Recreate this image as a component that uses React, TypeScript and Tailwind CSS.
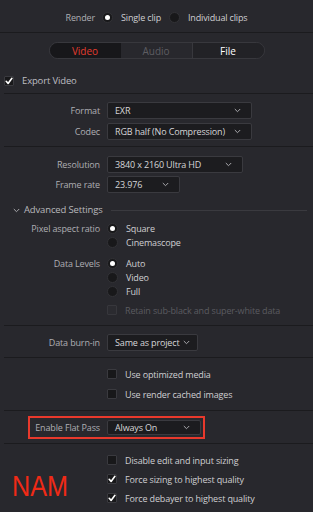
import React from 'react';

const Radio = ({ on = false }: { on?: boolean }) => (
  <span className="w-[11px] h-[11px] rounded-full bg-[#18181a] border border-[#323236] flex items-center justify-center shrink-0">
    {on && <span className="w-[5px] h-[5px] rounded-full bg-white" />}
  </span>
);

const Check = ({ on = false, dim = false }: { on?: boolean; dim?: boolean }) => (
  <span className={`w-[10px] h-[10px] rounded-[1px] border flex items-center justify-center shrink-0 ${dim ? 'bg-[#2b2b30] border-[#37373c]' : 'bg-[#18181a] border-[#3a3a3f]'}`}>
    {on && (
      <svg width="8" height="8" viewBox="0 0 8 8">
        <path d="M1.2 4.3 L3.1 6.4 L6.9 1.3" fill="none" stroke="white" strokeWidth="1.6" strokeLinecap="round" strokeLinejoin="round" />
      </svg>
    )}
  </span>
);

const Chevron = () => (
  <svg width="7" height="5" viewBox="0 0 7 5" className="shrink-0">
    <path d="M0.8 1 L3.5 3.7 L6.2 1" fill="none" stroke="#a8a8ac" strokeWidth="1" />
  </svg>
);

const Select = ({ value, w, pr = 'pr-[10px]' }: { value: string; w: string; pr?: string }) => (
  <div className={`${w} ${pr} h-[17px] bg-[#1c1c1f] border border-[#3a3a3f] rounded-[2px] flex items-center justify-between gap-[4px] pl-[7px] text-[#d6d6d8] whitespace-nowrap`}>
    <span>{value}</span>
    <Chevron />
  </div>
);

function Field({ label, children, className = '' }: any) {
  return (
    <div className={`flex items-center ${className}`}>
      <div className="w-[100px] text-right text-[#aeaeb3] whitespace-nowrap">{label}</div>
      <div className="ml-[7px]">{children}</div>
    </div>
  );
}

function OptRow({ label, children, className = '' }: any) {
  return (
    <div className={`h-[14px] flex items-center ${className}`}>
      <div className="w-[100px] text-right text-[#aeaeb3] whitespace-nowrap">{label}</div>
      <div className="ml-[7px] flex items-center gap-[8px] text-[#cfcfd2] whitespace-nowrap">{children}</div>
    </div>
  );
}

const Line = ({ className = '' }: { className?: string }) => <div className={`h-px bg-[#1b1b1e] ml-[4px] ${className}`} />;

export default function App() {
  return (
    <div className="w-[313px] h-[512px] bg-[#28282d] overflow-hidden font-['Open_Sans',sans-serif] text-[9px] tracking-[-0.15px] leading-none text-[#cfcfd2]">
      {/* render mode */}
      <div className="h-[33px] pt-[3px] flex items-center justify-center border-b border-[#1b1b1e]">
        <span className="text-[#aeaeb3] mr-[7px]">Render</span>
        <Radio on />
        <span className="ml-[8px] mr-[8px]">Single clip</span>
        <Radio />
        <span className="ml-[8px]">Individual clips</span>
      </div>

      {/* tabs */}
      <div className="mt-[9px] mx-auto w-[216px] h-[17px] rounded-full border border-[#38383d] flex overflow-hidden text-[10px] tracking-normal">
        <div className="flex-1 bg-[#17171a] text-[#e23c2f] flex items-center justify-center">Video</div>
        <div className="flex-1 text-[#5d5d62] flex items-center justify-center">Audio</div>
        <div className="flex-1 bg-[#222226] text-white flex items-center justify-center border-l border-[#38383d]">File</div>
      </div>

      <div className="mt-[16px] ml-[4px] h-[12px] flex items-center gap-[8px]">
        <Check on />
        <span className="text-[#bdbdc1] text-[9.5px]">Export Video</span>
      </div>
      <Line className="mt-[6px]" />

      <Field label="Format" className="mt-[8px]"><Select value="EXR" w="w-[145px]" /></Field>
      <Field label="Codec" className="mt-[4px]"><Select value="RGB half (No Compression)" w="w-[145px]" /></Field>
      <Line className="mt-[6px]" />

      <Field label="Resolution" className="mt-[9px]"><Select value="3840 x 2160 Ultra HD" w="w-[136px]" /></Field>
      <Field label="Frame rate" className="mt-[3px]"><Select value="23.976" w="w-[73px]" /></Field>

      {/* advanced */}
      <div className="mt-[10px] h-[14px] flex items-center pl-[13px] pr-[6px]">
        <Chevron />
        <span className="ml-[4px] text-[#b8b8bc] text-[9.5px]">Advanced Settings</span>
        <div className="flex-1 h-px bg-[#3a3a3f] ml-[8px]" />
      </div>

      <OptRow label="Pixel aspect ratio" className="mt-[4px]"><Radio on /><span>Square</span></OptRow>
      <OptRow label=""><Radio /><span>Cinemascope</span></OptRow>

      <OptRow label="Data Levels" className="mt-[7px]"><Radio on /><span>Auto</span></OptRow>
      <OptRow label=""><Radio /><span>Video</span></OptRow>
      <OptRow label=""><Radio /><span>Full</span></OptRow>
      <OptRow label="" className="mt-[5px]"><Check dim /><span className="text-[#5b5b60]">Retain sub-black and super-white data</span></OptRow>
      <Line className="mt-[8px]" />

      <Field label="Data burn-in" className="mt-[8px]"><Select value="Same as project" w="w-[91px]" pr="pr-[7px]" /></Field>
      <Line className="mt-[6px]" />

      <OptRow label="" className="mt-[9px]"><Check /><span>Use optimized media</span></OptRow>
      <OptRow label="" className="mt-[6px]"><Check /><span>Use render cached images</span></OptRow>
      <Line className="mt-[9px]" />

      {/* highlighted flat pass */}
      <div className="mt-[5px] ml-[28px] w-[177px] h-[23px] border-2 border-[#e8392c] flex items-center">
        <div className="w-[70px] text-right text-[#aeaeb3] whitespace-nowrap">Enable Flat Pass</div>
        <div className="ml-[7px]">
          <div className="w-[94px] h-[15px] bg-[#1c1c1f] border border-[#3a3a3f] rounded-[2px] flex items-center justify-between pl-[7px] pr-[10px] text-[#d6d6d8]">
            <span>Always On</span>
            <Chevron />
          </div>
        </div>
      </div>
      <Line className="mt-[4px]" />

      <div className="flex">
        <div className="w-[107px] pl-[12px] pt-[28px]">
          <span className="inline-block origin-left scale-x-[0.87] font-['Liberation_Sans',sans-serif] text-[29px] leading-none tracking-normal text-[#f02a16]">NAM</span>
        </div>
        <div className="flex flex-col">
          <div className="mt-[9px] h-[14px] flex items-center gap-[8px]"><Check /><span>Disable edit and input sizing</span></div>
          <div className="mt-[5px] h-[14px] flex items-center gap-[8px]"><Check on /><span>Force sizing to highest quality</span></div>
          <div className="mt-[5px] h-[14px] flex items-center gap-[8px]"><Check on /><span>Force debayer to highest quality</span></div>
        </div>
      </div>
    </div>
  );
}
